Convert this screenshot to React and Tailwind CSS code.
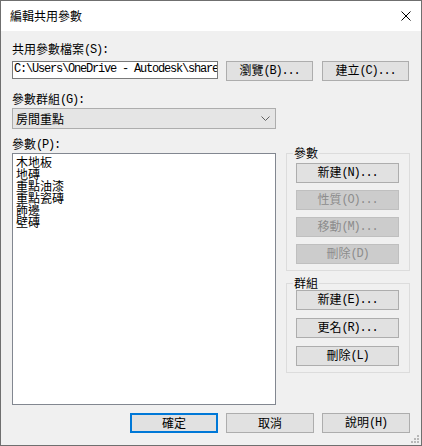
import React from "react";

const CJK = "font-['Noto_Sans_CJK_TC',sans-serif]";

// ascii runs in a narrow mono face, CJK stays full width
function T({ s }) {
  return s.split(/([\x20-\x7e]+)/).map((p, i) =>
    /[\x20-\x7e]/.test(p) ? (
      <span key={i} className="font-['Liberation_Mono',monospace] text-[12px] tracking-[-1.2px] relative -top-[1px]">
        {p}
      </span>
    ) : (
      <React.Fragment key={i}>{p}</React.Fragment>
    )
  );
}

function Btn({ label, disabled, def, className = "" }) {
  return (
    <div
      className={`h-[20px] flex items-center justify-center leading-[12px] ${
        def
          ? "border-2 border-[#0078d7] bg-[#e1e1e1]"
          : disabled
          ? "border border-[#bfbfbf] bg-[#cccccc] text-[#8d8d8d]"
          : "border border-[#adadad] bg-[#e1e1e1]"
      } ${className}`}
    >
      <span>
        <T s={label} />
      </span>
    </div>
  );
}

function Group({ title, children, className = "" }) {
  return (
    <div className={`relative border border-[#dcdcdc] ${className}`}>
      <span className="absolute left-[6px] -top-[7px] px-[1px] bg-[#f0f0f0] leading-[12px]">{title}</span>
      {children}
    </div>
  );
}

export default function App() {
  const items = ["木地板", "地磚", "重點油漆", "重點瓷磚", "飾邊", "壁磚"];

  return (
    <div className={`relative w-[422px] h-[446px] border border-[#6f6f6f] bg-[#f0f0f0] flex flex-col text-[12px] text-black ${CJK}`}>
      {/* Title bar */}
      <div className="h-[30px] bg-white flex items-center justify-between pl-[9px] pr-[10px]">
        <span className="leading-[12px]">編輯共用參數</span>
        <svg width="10" height="10" viewBox="0 0 10 10">
          <path d="M0.5 0.5L9.5 9.5M9.5 0.5L0.5 9.5" stroke="#000" strokeWidth="1" />
        </svg>
      </div>

      <div className="flex-1 px-[11px] flex flex-col">
        <div className="mt-[12px] h-[12px] leading-[12px]">
          <T s="共用參數檔案(S):" />
        </div>
        <div className="mt-[6px] flex items-start">
          <div className="w-[206px] h-[18px] border border-[#7a7a7a] bg-white overflow-hidden whitespace-nowrap flex items-center pl-[1px] leading-[12px]">
            <T s="C:\Users\OneDrive - Autodesk\shared parameters.txt" />
          </div>
          <Btn label="瀏覽(B)..." className="ml-[8px] w-[87px]" />
          <Btn label="建立(C)..." className="ml-[9px] w-[87px]" />
        </div>

        <div className="mt-[12px] h-[12px] leading-[12px]">
          <T s="參數群組(G):" />
        </div>
        <div className="mt-[3px] w-[264px] h-[21px] border border-[#adadad] bg-[#e5e5e5] flex items-center justify-between pl-[3px] pr-[5px]">
          <span className="leading-[12px]">房間重點</span>
          <svg width="9" height="5" viewBox="0 0 9 5">
            <path d="M0.5 0.5L4.5 4.5L8.5 0.5" fill="none" stroke="#606060" strokeWidth="1" />
          </svg>
        </div>

        <div className="mt-[9px] h-[12px] leading-[12px]">
          <T s="參數(P):" />
        </div>

        <div className="mt-[3px] flex">
          <div className="w-[264px] h-[252px] border border-[#828790] bg-white pt-[2px] pl-[3px]">
            {items.map((it) => (
              <div key={it} className="leading-[12px] h-[12px]">
                {it}
              </div>
            ))}
          </div>

          <div className="ml-[10px] w-[124px] flex flex-col">
            <Group title="參數" className="h-[118px] pt-[9px] pl-[9px] flex flex-col gap-[7px]">
              <Btn label="新建(N)..." className="w-[103px]" />
              <Btn label="性質(O)..." disabled className="w-[103px]" />
              <Btn label="移動(M)..." disabled className="w-[103px]" />
              <Btn label="刪除(D)" disabled className="w-[103px]" />
            </Group>
            <Group title="群組" className="mt-[12px] h-[90px] pt-[6px] pl-[9px] flex flex-col gap-[8px]">
              <Btn label="新建(E)..." className="w-[103px]" />
              <Btn label="更名(R)..." className="w-[103px]" />
              <Btn label="刪除(L)" className="w-[103px]" />
            </Group>
          </div>
        </div>

        <div className="mt-[8px] flex justify-end gap-[8px]">
          <Btn label="確定" def className="w-[88px]" />
          <Btn label="取消" className="w-[88px]" />
          <Btn label="說明(H)" className="w-[88px]" />
        </div>
      </div>

      {/* size grip */}
      <svg className="absolute right-[2px] bottom-[2px]" width="8" height="8" viewBox="0 0 8 8">
        {[
          [6, 0],
          [3, 3],
          [6, 3],
          [0, 6],
          [3, 6],
          [6, 6],
        ].map(([x, y]) => (
          <rect key={`${x}-${y}`} x={x} y={y} width="2" height="2" fill="#b8b8b8" />
        ))}
      </svg>
    </div>
  );
}
